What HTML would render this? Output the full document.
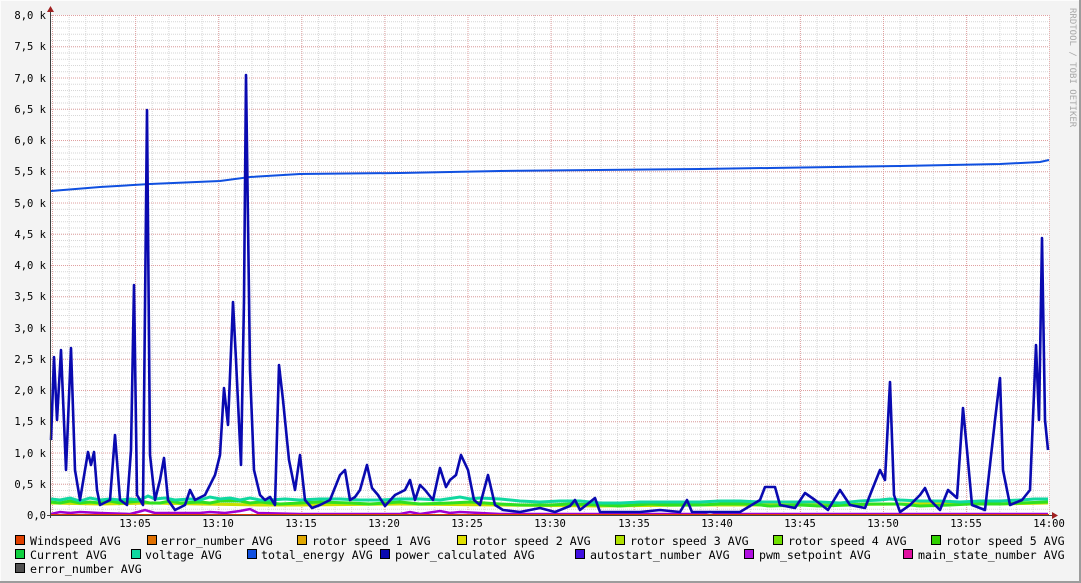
<!DOCTYPE html>
<html><head><meta charset="utf-8"><style>
html,body{margin:0;padding:0;background:#f3f3f3;}
svg{display:block;}
text{font-family:"DejaVu Sans Mono","Liberation Mono",monospace;}
</style></head><body>
<svg width="1081" height="583" viewBox="0 0 1081 583" xmlns="http://www.w3.org/2000/svg">
<defs>
<pattern id="mh" x="51" y="15" width="2" height="6.25" patternUnits="userSpaceOnUse"><rect x="0" y="0" width="1" height="1" fill="#d6d6d6"/></pattern>
<pattern id="mv" x="52" y="15" width="16.62" height="2" patternUnits="userSpaceOnUse"><rect x="0" y="0" width="1" height="1" fill="#d6d6d6"/></pattern>
<pattern id="Mh" x="51" y="15" width="2" height="31.25" patternUnits="userSpaceOnUse"><rect x="0" y="0" width="1" height="1" fill="#e0a0a0"/></pattern>
<pattern id="Mv" x="52" y="15" width="83.1" height="2" patternUnits="userSpaceOnUse"><rect x="0" y="0" width="1" height="1" fill="#e0a0a0"/></pattern>
</defs>
<rect x="0" y="0" width="1081" height="583" fill="#f3f3f3"/>
<rect x="0" y="0" width="1081" height="1" fill="#fcfcfc"/>
<rect x="0" y="0" width="1" height="583" fill="#fcfcfc"/>
<rect x="1079" y="0" width="2" height="583" fill="#9c9c9c"/>
<rect x="0" y="581" width="1081" height="2" fill="#9c9c9c"/>
<rect x="51" y="15" width="998" height="500" fill="#fff"/>
<rect x="51" y="15" width="998" height="500" fill="url(#mh)"/>
<rect x="51" y="15" width="998" height="500" fill="url(#mv)"/>
<rect x="51" y="15" width="998" height="500" fill="url(#Mh)"/>
<rect x="51" y="15" width="999" height="500" fill="url(#Mv)"/>
<g font-size="10.5" fill="#000" text-anchor="end">
<text x="46" y="19">8,0 k</text><text x="46" y="50">7,5 k</text><text x="46" y="82">7,0 k</text><text x="46" y="113">6,5 k</text>
<text x="46" y="144">6,0 k</text><text x="46" y="175">5,5 k</text><text x="46" y="207">5,0 k</text><text x="46" y="238">4,5 k</text>
<text x="46" y="269">4,0 k</text><text x="46" y="300">3,5 k</text><text x="46" y="332">3,0 k</text><text x="46" y="363">2,5 k</text>
<text x="46" y="394">2,0 k</text><text x="46" y="425">1,5 k</text><text x="46" y="457">1,0 k</text><text x="46" y="488">0,5 k</text>
<text x="46" y="519">0,0</text>
</g>
<g font-size="10.5" fill="#000" text-anchor="middle">
<text x="135" y="527">13:05</text><text x="218" y="527">13:10</text><text x="301" y="527">13:15</text><text x="384" y="527">13:20</text>
<text x="467" y="527">13:25</text><text x="550" y="527">13:30</text><text x="634" y="527">13:35</text><text x="717" y="527">13:40</text>
<text x="800" y="527">13:45</text><text x="883" y="527">13:50</text><text x="966" y="527">13:55</text><text x="1049" y="527">14:00</text>
</g>
<text x="1070" y="8" font-size="9" fill="#a8a8a8" transform="rotate(90 1070 8)">RRDTOOL / TOBI OETIKER</text>
<polyline fill="none" stroke="#c8e000" stroke-width="3" points="51,503 100,504 150,503 200,504 260,505 300,505 400,504 500,505 600,506 700,505 800,505 900,504 1000,504 1048,503"/>
<polyline fill="none" stroke="#30e020" stroke-width="3" points="51,502 60,503 70,501 80,503 90,502 100,503 110,501 120,503 140,501 150,503 160,503 170,501 180,503 200,502 210,503 220,501 240,501 250,503 260,502 280,504 300,503 320,502 350,503 370,504 400,502 420,504 450,503 470,502 500,504 520,505 550,505 570,504 600,505 620,506 650,504 670,505 700,505 720,504 750,504 770,506 800,505 820,506 850,505 870,504 900,504 920,506 950,505 970,504 1000,504 1020,503 1048,502"/>
<polyline fill="none" stroke="#10d8a0" stroke-width="3" points="51,499 60,500 70,498 80,501 90,498 100,500 110,499 120,500 130,499 140,500 148,496 155,499 165,498 175,500 190,499 200,500 210,497 220,499 230,498 240,500 250,498 260,500 270,500 285,499 300,500 320,499 340,499 360,500 380,500 400,499 420,499 440,500 460,497 470,499 480,498 500,499 520,501 540,502 560,501 580,501 600,503 620,503 640,502 660,502 680,502 700,502 720,501 740,501 760,502 780,502 800,502 820,502 840,503 860,501 880,500 890,499 900,500 920,501 940,501 960,502 980,501 1000,501 1020,500 1035,499 1048,499"/>
<polyline fill="none" stroke="#a000d0" stroke-width="2.5" points="51,514 60,512 70,513 80,512 100,513 130,514 138,512 145,510 155,513 200,513 210,512 225,513 240,511 250,509 258,513 300,514 400,514 410,512 420,514 440,511 450,513 460,512 500,514 700,514 710,512 720,514 1048,514"/>
<polyline fill="none" stroke="#e04000" stroke-width="2" points="51,515 1049,515"/>
<polyline fill="none" stroke="#1050e0" stroke-width="2" points="51,191 100,187 150,184 220,181 250,177 300,174 400,173 500,171 700,169 900,166 1000,164 1040,162 1049,160"/>
<polyline fill="none" stroke="#0a0ab0" stroke-width="2.6" stroke-linejoin="round" points="51,440 54,357 57,420 61,350 66,470 71,348 75,470 80,500 85,470 88,452 91,465 94,452 97,490 100,505 110,500 115,435 120,500 127,505 131,450 134,285 137,495 143,505 147,110 150,455 155,500 160,480 164,458 168,500 175,510 185,505 190,490 195,500 205,495 215,475 220,455 224,388 228,425 233,302 236,360 241,465 244,300 246,75 250,370 254,470 260,495 265,500 270,497 275,505 279,365 283,400 289,460 295,490 300,455 305,500 312,508 320,505 330,500 340,475 345,470 350,500 355,497 360,490 367,465 372,488 378,495 385,506 395,495 405,490 410,480 415,500 420,485 425,490 433,500 440,468 446,487 450,480 456,475 461,455 468,470 474,500 480,505 488,475 495,505 503,510 520,512 540,508 555,512 570,506 575,500 580,510 595,498 600,512 640,512 660,510 680,512 687,500 692,512 740,512 760,500 765,487 775,487 780,505 795,508 805,493 815,500 828,510 840,490 850,505 865,508 872,490 880,470 885,480 890,382 894,495 900,512 910,505 920,495 925,488 930,500 940,510 948,490 957,498 963,408 967,450 972,505 985,510 995,420 1000,378 1003,470 1010,505 1022,500 1030,490 1036,345 1039,420 1042,238 1045,420 1048,450"/>
<rect x="50" y="12" width="1" height="506" fill="#404040"/>
<rect x="47" y="515" width="1006" height="1" fill="#404040"/>
<polygon points="47,12 54,12 50.5,6" fill="#a02020"/>
<polygon points="1052,512 1052,519 1058,515.5" fill="#a02020"/>
<g font-size="11.6" fill="#000">
<g stroke="#000" stroke-width="1">
<rect x="15.5" y="535.5" width="9" height="9" fill="#e04000"/>
<rect x="147.5" y="535.5" width="9" height="9" fill="#e07000"/>
<rect x="297.5" y="535.5" width="9" height="9" fill="#e0a800"/>
<rect x="457.5" y="535.5" width="9" height="9" fill="#e0e000"/>
<rect x="615.5" y="535.5" width="9" height="9" fill="#b0e000"/>
<rect x="773.5" y="535.5" width="9" height="9" fill="#70e000"/>
<rect x="931.5" y="535.5" width="9" height="9" fill="#30d000"/>
<rect x="15.5" y="549.5" width="9" height="9" fill="#10d040"/>
<rect x="131.5" y="549.5" width="9" height="9" fill="#10d8a0"/>
<rect x="247.5" y="549.5" width="9" height="9" fill="#1050e0"/>
<rect x="380.5" y="549.5" width="9" height="9" fill="#0a0ab0"/>
<rect x="575.5" y="549.5" width="9" height="9" fill="#4010e0"/>
<rect x="744.5" y="549.5" width="9" height="9" fill="#b010e0"/>
<rect x="903.5" y="549.5" width="9" height="9" fill="#e010a0"/>
<rect x="15.5" y="563.5" width="9" height="9" fill="#505050"/>
</g>
<text x="30" y="545">Windspeed AVG</text>
<text x="161" y="545">error_number AVG</text>
<text x="312" y="545">rotor speed 1 AVG</text>
<text x="472" y="545">rotor speed 2 AVG</text>
<text x="630" y="545">rotor speed 3 AVG</text>
<text x="788" y="545">rotor speed 4 AVG</text>
<text x="946" y="545">rotor speed 5 AVG</text>
<text x="30" y="559">Current AVG</text>
<text x="145" y="559">voltage AVG</text>
<text x="261" y="559">total_energy AVG</text>
<text x="395" y="559">power_calculated AVG</text>
<text x="590" y="559">autostart_number AVG</text>
<text x="759" y="559">pwm_setpoint AVG</text>
<text x="918" y="559">main_state_number AVG</text>
<text x="30" y="573">error_number AVG</text>
</g>
</svg>
</body></html>
